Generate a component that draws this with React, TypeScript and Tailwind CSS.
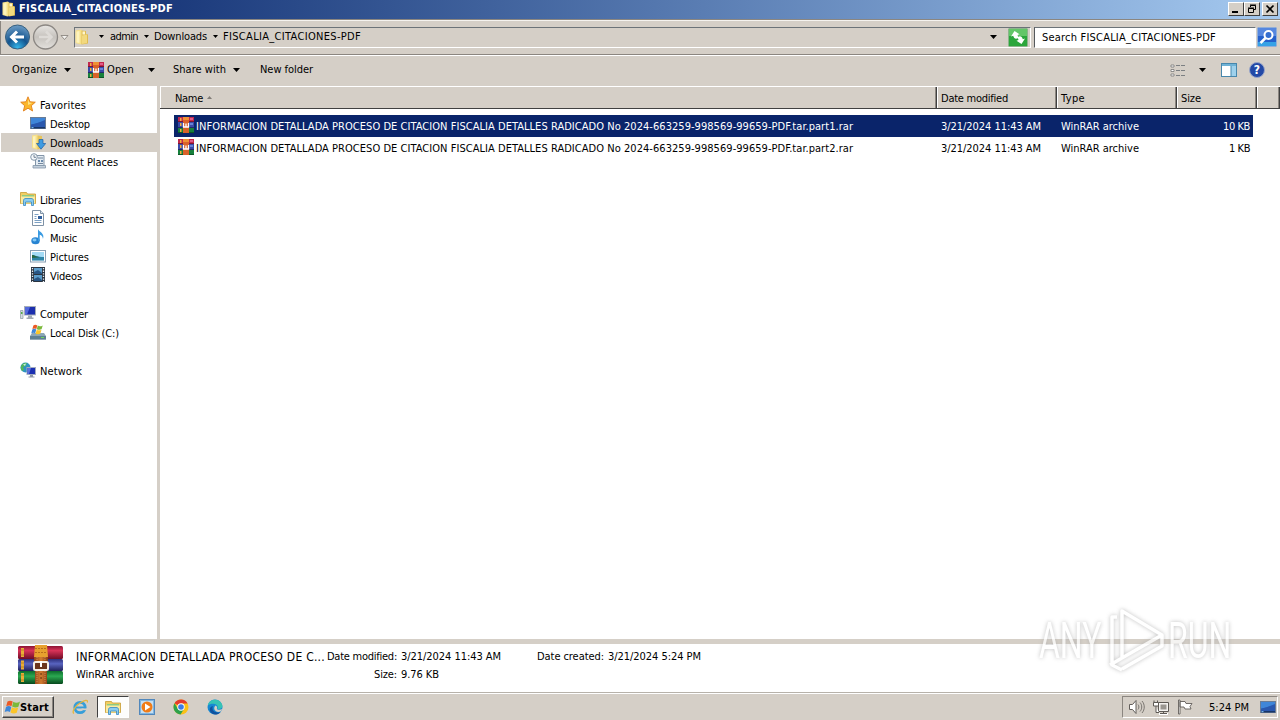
import { useLayoutEffect, useRef, useState } from 'react';
import type { ReactNode } from 'react';

interface LabelProps {
  w: number;
  children: string;
  className?: string;
}

// Text fitted to a fixed width by adjusting its tracking
function Label({ w, children, className = '' }: LabelProps) {
  const ref = useRef<HTMLSpanElement>(null);
  const [spacing, setSpacing] = useState(0);

  useLayoutEffect(() => {
    if (!ref.current) return;
    setSpacing((w - ref.current.getBoundingClientRect().width) / children.length);
  }, [w, children]);

  return (
    <span className={`flex shrink-0 whitespace-pre ${className}`} style={{ width: w }}>
      <span ref={ref} className="shrink-0" style={{ letterSpacing: spacing }}>
        {children}
      </span>
    </span>
  );
}

function Arrow({ className = '' }: { className?: string }) {
  return (
    <svg viewBox="0 0 7 4" className={`h-1 w-[7px] shrink-0 ${className}`}>
      <path d="M0 0h7L3.5 4z" fill="#000" />
    </svg>
  );
}

function SmallArrow({ className = '' }: { className?: string }) {
  return (
    <svg viewBox="0 0 5 3" className={`h-[3px] w-[5px] shrink-0 ${className}`}>
      <path d="M0 0h5L2.5 3z" fill="#000" />
    </svg>
  );
}

function FolderIcon() {
  return (
    <svg viewBox="0 0 16 16" className="size-4 shrink-0">
      <path d="M1.500 1.500 7 .5l1 1v13l-1.500 1L1.500 14z" fill="#f6e08a" />
      <path d="M7.500 1.500 12 2v3l2 .5v9l-6.500 1z" fill="#dfbb50" />
      <path d="M8 6.500 13 5.500v8.500l-5 1z" fill="#f2d97e" />
      <path d="M2.500 2.500 5.500 2v12l-3-.5z" fill="#fdf3bd" />
      <path d="M8.500 2.500h2.500v3H8.500z" fill="#fff6cc" />
    </svg>
  );
}

function RarIcon() {
  return (
    <svg viewBox="0 0 16 16" className="size-4 shrink-0">
      <rect y="0" width="16" height="5" fill="#c2284c" />
      <rect y="5" width="16" height="6" fill="#3949a8" />
      <rect y="11" width="16" height="5" fill="#16803c" />
      <path d="M0 4h16v1H0z" fill="#7c1430" />
      <path d="M0 10h16v1H0z" fill="#23276a" />
      <path d="M0 15h16v1H0z" fill="#0c5726" />
      <path d="M2 1h1.500v3H2zM2 6h1.500v3H2zM2 12h1.500v3H2z" fill="#efae3c" />
      <path d="M12 1h3v2h-3z" fill="#e05c8a" />
      <path d="M12 6h3v2h-3z" fill="#6684d8" />
      <path d="M5 0h6v16H5z" fill="#d9622a" />
      <path d="M5 0h6v3H5z" fill="#f09035" />
      <path d="M5.500 6v4h5V6M8 6.500v3" fill="none" stroke="#fff" strokeWidth="1.300" />
    </svg>
  );
}

function BigRarIcon() {
  return (
    <svg viewBox="0 0 46 40" className="h-10 w-[46px] shrink-0">
      <defs>
        <linearGradient id="bookRed" x2="0" y2="1">
          <stop offset="0" stopColor="#8c1433" />
          <stop offset=".35" stopColor="#d83358" />
          <stop offset="1" stopColor="#6e0c26" />
        </linearGradient>
        <linearGradient id="bookBlue" x2="0" y2="1">
          <stop offset="0" stopColor="#2c2f7c" />
          <stop offset=".4" stopColor="#5964c0" />
          <stop offset="1" stopColor="#202058" />
        </linearGradient>
        <linearGradient id="bookGreen" x2="0" y2="1">
          <stop offset="0" stopColor="#0c6a2c" />
          <stop offset=".4" stopColor="#2ba851" />
          <stop offset="1" stopColor="#07481d" />
        </linearGradient>
        <linearGradient id="belt">
          <stop offset="0" stopColor="#8e451b" />
          <stop offset=".5" stopColor="#d27c31" />
          <stop offset="1" stopColor="#873d16" />
        </linearGradient>
      </defs>
      <rect y="1" x="1" width="45" height="13" rx="1.500" fill="url(#bookRed)" />
      <rect y="14" x="1" width="45" height="12" rx="1.500" fill="url(#bookBlue)" />
      <rect y="26" x="1" width="45" height="13" rx="1.500" fill="url(#bookGreen)" />
      <path d="M4 3h3v9H4zM4 15.500h3v9H4zM4 28h3v9H4z" fill="#e9ad38" />
      <path d="M4 5h3M4 10h3M4 18h3M4 22h3M4 30h3M4 35h3" stroke="#9e6a18" strokeWidth=".6" />
      <path d="M18 0h12l1 12H17z" fill="#e8a12e" />
      <path d="M18 3.500h12M18 7.500h12" stroke="#b86e1b" strokeWidth="1" strokeDasharray="2 1" />
      <path d="M17 12h14v4l-1 2v21H18V18l-1-2z" fill="url(#belt)" />
      <path d="M20 12v26M28 12v26" stroke="#eab176" strokeWidth=".6" strokeDasharray="1 1" />
      <rect x="17" y="17" width="14" height="8" rx="1.500" fill="#6b351c" stroke="#f5f0e7" strokeWidth="2" />
      <path d="M24 16v6" stroke="#fff" strokeWidth="2" />
      <path d="M24 29h.1M24 33h.1" stroke="#4c2109" strokeWidth="1.500" strokeLinecap="round" />
    </svg>
  );
}

function StarIcon() {
  return (
    <svg viewBox="0 0 16 16" className="size-4 shrink-0">
      <path d="m8 .8 2 5 5.300.400-4 3.500 1.300 5.300L8 12.200 3.400 15l1.300-5.300-4-3.500L6 5.800z" fill="#fbb72c" stroke="#e2801d" strokeWidth=".9" />
      <path d="m8 3 1.200 3.500 3 .5-4.200 2z" fill="#ffe486" />
    </svg>
  );
}

function DesktopIcon() {
  return (
    <svg viewBox="0 0 16 16" className="size-4 shrink-0">
      <rect x=".5" y="2.500" width="15" height="11" fill="#2563b4" stroke="#6a7c94" />
      <path d="M1 3h14v3L1 10z" fill="#3f86d8" />
      <path d="M1 9.500C6 9 10 7 15 5v7H1z" fill="#2a58ae" />
      <path d="M1 12h14v1.500H1z" fill="#183668" />
      <path d="M1.500 12h2v1.200h-2z" fill="#75b6ed" />
    </svg>
  );
}

function DownloadsIcon() {
  return (
    <svg viewBox="0 0 16 16" className="size-4 shrink-0">
      <path d="M2 1.500 7 .5l1 1v13l-1.500 1L2 14z" fill="#f6e08a" />
      <path d="M7.500 1.500 12 2v12l-4.500 1.500z" fill="#e8c55b" />
      <path d="M3 2.500 5.500 2v12L3 13.500z" fill="#fdf3bd" />
      <path d="M9 5.500h4v4h2.700L11 15.200 6.500 9.500H9z" fill="#3f9be2" stroke="#1d5fa5" strokeWidth=".7" />
    </svg>
  );
}

function RecentIcon() {
  return (
    <svg viewBox="0 0 16 16" className="size-4 shrink-0">
      <path d="M5.500 2.500h8.500v10H5.500z" fill="#e3ebf2" stroke="#8395a8" />
      <path d="M3 12.500h12.500V15H3z" fill="#c4d0dc" stroke="#8395a8" strokeWidth=".8" />
      <path d="M8 5h5M8 10.500h5" stroke="#74879d" />
      <path d="M8 7h2v2H8zM11 7h2v2h-2z" fill="#6d8cae" />
      <circle cx="4" cy="4" r="3.300" fill="#f5f8fb" stroke="#8698aa" />
      <path d="M4 2v2.300h2" fill="none" stroke="#50657c" strokeWidth=".8" />
    </svg>
  );
}

function LibrariesIcon() {
  return (
    <svg viewBox="0 0 16 16" className="size-4 shrink-0">
      <path d="M.5 3V1.500h6l1 1.500h8v9.500H.5z" fill="#f2cf63" stroke="#c79c34" strokeWidth=".8" />
      <path d="M2 4h12v2H2z" fill="#8ecb83" />
      <path d="M1 5.500h14v7H1z" fill="#fbeaa0" />
      <path d="M3.500 14.500V9.700C3.500 8 4.500 7.500 6 7.500h5c1.500 0 2.500.5 2.500 2.200v4.800h-2v-3.500h-6v3.500z" fill="#8accf1" stroke="#3588c2" strokeWidth=".8" />
    </svg>
  );
}

function DocumentsIcon() {
  return (
    <svg viewBox="0 0 16 16" className="size-4 shrink-0">
      <path d="M2.500.5h8l3 3v12h-11z" fill="#fff" stroke="#7f92a6" />
      <path d="M10.500.5v3h3" fill="#dce6ef" stroke="#7f92a6" />
      <path d="M4.500 4.500h4M4.500 6.500h2M4.500 8.500h2M4.500 10.500h7M4.500 12.500h7" stroke="#7ca0c4" />
      <path d="M8 6h4v3H8z" fill="#305f9e" />
    </svg>
  );
}

function MusicIcon() {
  return (
    <svg viewBox="0 0 16 16" className="size-4 shrink-0">
      <ellipse cx="5.500" cy="11.800" rx="4.200" ry="3.500" fill="#2784d2" />
      <ellipse cx="4.500" cy="11" rx="2" ry="1.400" fill="#83c8f5" />
      <path d="M8 12V.3C9.500 3 15 4.500 13 10c-.3-2.500-1.500-3.700-3.300-4.200V12z" fill="#3a9be2" />
    </svg>
  );
}

function PicturesIcon() {
  return (
    <svg viewBox="0 0 16 16" className="size-4 shrink-0">
      <rect x=".5" y="2.500" width="15" height="11.500" fill="#fff" stroke="#8aa0b4" />
      <path d="M2 4h12v8.500H2z" fill="#a4dbf5" />
      <path d="M2 7c3 0 5 2 12 2v3.500H2z" fill="#2e84a6" />
      <path d="M2 7c3 0 4 2 8 2.300L2 10z" fill="#276843" />
    </svg>
  );
}

function VideosIcon() {
  return (
    <svg viewBox="0 0 16 16" className="size-4 shrink-0">
      <path d="M1 0h14v15H1z" fill="#2a3440" />
      <path d="M4 1h8v6H4zM4 8h8v6H4z" fill="#5c9dcb" />
      <path d="m4 5 4-2 4 3v1H4zM4 12l4-2 4 3v1H4z" fill="#285583" />
      <path d="M2.500 1v14M13.500 1v14" stroke="#e9eef3" strokeWidth="1.300" strokeDasharray="1.300 1.300" />
    </svg>
  );
}

function ComputerIcon() {
  return (
    <svg viewBox="0 0 16 16" className="size-4 shrink-0">
      <rect x="4.500" y="1.500" width="11" height="8.500" fill="#1c2fae" stroke="#a5adb8" />
      <path d="M5 2h5L7 9.500H5z" fill="#5369dc" />
      <path d="M8 10.500h4v2H8zM6.500 12.500h7V14h-7z" fill="#a2aab4" />
      <path d="M.5 5.500h2.500v8H.5z" fill="#d6dde0" stroke="#8b99a2" strokeWidth=".7" />
      <path d="M1 7h1.500v2H1z" fill="#55ae48" />
    </svg>
  );
}

function FlagShape() {
  return (
    <>
      <path d="M2.500 2.500C4.500 1.200 6 1.500 7.700 2.500L6.500 7.300C5 6.300 3.300 6.300 1.200 7.300z" fill="#ec5a25" />
      <path d="M8.300 2.800C10.500 4 12.500 4 15 2.500l-1.600 5.300c-2 1-4 .8-6.300-.2z" fill="#7bb93a" />
      <path d="M1 7.900c2-1.200 3.600-1 5.300 0L5 13c-1.700-1-3.400-1-5.300 0z" fill="#3e87d8" />
      <path d="M6.900 8.300c2 1 4 1.200 6.300.2l-1.500 5.300c-2 1-4.200.8-6.200-.2z" fill="#fbc529" />
    </>
  );
}

function DiskIcon() {
  return (
    <svg viewBox="0 0 16 16" className="size-4 shrink-0">
      <path d="M2 9h12l2 3v3.500H0V12z" fill="#8ba6b6" />
      <path d="M0 12h16v3.500H0z" fill="#5e7f92" />
      <path d="M11 13.500h3" stroke="#71d85b" />
      <g transform="translate(1.500 -.5) scale(.75)">
        <FlagShape />
      </g>
    </svg>
  );
}

function NetworkIcon() {
  return (
    <svg viewBox="0 0 16 16" className="size-4 shrink-0">
      <circle cx="5.500" cy="5.500" r="5" fill="#2e93c3" />
      <path d="M2 2.500c2-2 4-1.500 5-1.500L5.500 4 3 5l1 3-2 1C.2 7 .5 4.500 2 2.500z" fill="#52b65b" />
      <path d="M3 2.500 6 1.500 5 4z" fill="#c7f0e6" />
      <rect x="7" y="5.500" width="8.500" height="7" fill="#1b30b2" stroke="#a3abc0" />
      <path d="M7.500 6h3.500l-2 6H7.500z" fill="#5a70dd" />
      <path d="M10 13h3v1.500h1.500v1h-6v-1H10z" fill="#8f98a6" />
    </svg>
  );
}

interface NavItem {
  text: string;
  w: number;
  icon: ReactNode;
  root?: boolean;
  active?: boolean;
}

const navGroups: NavItem[][] = [
  [
    { text: 'Favorites', w: 46, icon: <StarIcon />, root: true },
    { text: 'Desktop', w: 40, icon: <DesktopIcon /> },
    { text: 'Downloads', w: 53, icon: <DownloadsIcon />, active: true },
    { text: 'Recent Places', w: 68, icon: <RecentIcon /> },
  ],
  [
    { text: 'Libraries', w: 41, icon: <LibrariesIcon />, root: true },
    { text: 'Documents', w: 54, icon: <DocumentsIcon /> },
    { text: 'Music', w: 27, icon: <MusicIcon /> },
    { text: 'Pictures', w: 39, icon: <PicturesIcon /> },
    { text: 'Videos', w: 32, icon: <VideosIcon /> },
  ],
  [
    { text: 'Computer', w: 48, icon: <ComputerIcon />, root: true },
    { text: 'Local Disk (C:)', w: 69, icon: <DiskIcon /> },
  ],
  [{ text: 'Network', w: 42, icon: <NetworkIcon />, root: true }],
];

const files = [
  {
    name: 'INFORMACION DETALLADA PROCESO DE CITACION FISCALIA DETALLES RADICADO No 2024-663259-998569-99659-PDF.tar.part1.rar',
    size: '10 KB',
    sizeWidth: 27,
    selected: true,
  },
  {
    name: 'INFORMACION DETALLADA PROCESO DE CITACION FISCALIA DETALLES RADICADO No 2024-663259-998569-99659-PDF.tar.part2.rar',
    size: '1 KB',
    sizeWidth: 21,
    selected: false,
  },
];

function TitleBar() {
  const button =
    'flex h-[14px] w-4 items-center justify-center border border-t-white border-l-white border-r-[#404040] border-b-[#404040] bg-[#d5cfc7]';
  return (
    <div className="flex h-[19px] items-center bg-linear-to-r from-[#0a246a] to-[#a6caf0] pr-[2px] pb-px pl-px">
      <FolderIcon />
      <Label w={154} className="ml-[2px] font-bold text-white">
        FISCALIA_CITACIONES-PDF
      </Label>
      <div className="ml-auto flex">
        <div className={button}>
          <svg viewBox="0 0 12 12" className="size-3 shrink-0">
            <path d="M2 8h6v2H2z" />
          </svg>
        </div>
        <div className={button}>
          <svg viewBox="0 0 12 12" className="size-3 shrink-0" fill="none" stroke="#000">
            <path d="M4.500 4V2.500h5v4H8M4 2h6M2.500 5.500h5v4h-5zM2 5h6" />
          </svg>
        </div>
        <div className={`${button} ml-[2px]`}>
          <svg viewBox="0 0 12 12" className="size-3 shrink-0">
            <path d="m2.500 2.500 7 7M9.500 2.500l-7 7" stroke="#000" strokeWidth="1.700" />
          </svg>
        </div>
      </div>
    </div>
  );
}

function AddressBar() {
  return (
    <div className="flex h-[36px] items-center border-t border-b border-t-[#8b8680] border-b-[#8b8680] shadow-[inset_0_1px_0_#f5f3ef,inset_1px_0_0_#8b8680]">
      <svg viewBox="0 0 66 28" className="ml-[4px] h-7 w-[66px] shrink-0">
        <defs>
          <radialGradient id="backFill" cx=".5" cy=".95" r=".95">
            <stop offset="0" stopColor="#35b8ec" />
            <stop offset=".45" stopColor="#14558f" />
            <stop offset="1" stopColor="#6e9dc6" />
          </radialGradient>
          <linearGradient id="forwardFill" x2="0" y2="1">
            <stop offset="0" stopColor="#e8e6e3" />
            <stop offset=".5" stopColor="#c6c2bd" />
            <stop offset="1" stopColor="#e4e1dd" />
          </linearGradient>
        </defs>
        <circle cx="13.500" cy="14" r="12" fill="url(#backFill)" stroke="#37607f" />
        <path d="M20 14H8M13 8.500 7.500 14l5.500 5.500" fill="none" stroke="#fff" strokeWidth="3" />
        <circle cx="41.500" cy="14" r="12" fill="url(#forwardFill)" stroke="#8b8783" strokeWidth="1.300" />
        <path d="M35 14h12M42 8.500l5.500 5.500-5.500 5.500" fill="none" stroke="#dedbd7" strokeWidth="2.500" />
        <path d="M57 12.500h7L60.500 16.500z" fill="#f5f3f0" stroke="#817c76" strokeWidth=".8" />
      </svg>
      <div className="ml-[4px] flex h-[21px] w-[957px] items-center border border-t-[#6c7378] border-r-white border-b-white border-l-[#6c7378] pb-px">
        <span className="-ml-px">
          <FolderIcon />
        </span>
        <SmallArrow className="ml-[9px]" />
        <Label w={28} className="ml-[6px]">admin</Label>
        <SmallArrow className="ml-[6px]" />
        <Label w={53} className="ml-[5px]">Downloads</Label>
        <SmallArrow className="ml-[6px]" />
        <Label w={138} className="ml-[5px]">FISCALIA_CITACIONES-PDF</Label>
        <Arrow className="mr-[33px] ml-auto" />
      </div>
      <svg viewBox="0 0 20 19" className="-ml-[23px] h-[19px] w-5 shrink-0">
        <rect x=".5" y=".5" width="19" height="18" rx="1" fill="#2ba63b" stroke="#8cb48c" />
        <path d="M1 1h18v7H1z" fill="#63c668" />
        <path d="M10.500 10 9.500 7l2-.8L6.500 3 3 8.500l2.200-.8C6 10.500 7.500 11.500 10.500 10z" fill="#fff" />
        <path d="M9.500 9l1 3-2 .8L13.500 16 17 10.500l-2.200.8C14 8.500 12.500 7.500 9.500 9z" fill="#fff" />
      </svg>
      <div className="ml-[6px] flex h-[21px] w-[222px] items-center border border-t-[#6c7378] border-r-white border-b-white border-l-[#55595c] bg-white pt-px pl-[7px]">
        <Label w={174}>Search FISCALIA_CITACIONES-PDF</Label>
      </div>
      <svg viewBox="0 0 20 20" className="ml-px size-5 shrink-0">
        <rect x=".5" y=".5" width="19" height="19" rx="1" fill="#2460cc" stroke="#92afd8" />
        <path d="M1 1h18v8H1z" fill="#5687df" />
        <path d="M1 15h18v4H1z" fill="#36a2e6" />
        <circle cx="11.500" cy="8" r="4" fill="#356ed0" stroke="#fff" strokeWidth="2" />
        <path d="m8.500 11-5 5" stroke="#fff" strokeWidth="2.500" />
      </svg>
    </div>
  );
}

function ToolBar() {
  return (
    <div className="flex h-[30px] items-center border-t border-white pb-px pl-3">
      <Label w={45}>Organize</Label>
      <Arrow className="ml-[7px]" />
      <span className="ml-[17px] flex items-center">
        <RarIcon />
      </span>
      <Label w={27} className="ml-[3px]">Open</Label>
      <Arrow className="ml-[14px]" />
      <Label w={53} className="ml-[18px]">Share with</Label>
      <Arrow className="ml-[7px]" />
      <Label w={53} className="ml-[20px]">New folder</Label>
      <svg viewBox="0 0 16 13" className="ml-auto h-[13px] w-4" fill="none">
        <path d="M1 1h3v2H1zM1 5.500h3v2H1zM1 10h3v2H1z" fill="#fff" stroke="#777" strokeWidth=".8" />
        <path d="M6 1.500h4M11 1.500h4M6 6.500h4M11 6.500h4M6 11.500h4M11 11.500h4" stroke="#7b7f82" />
      </svg>
      <Arrow className="ml-[13px]" />
      <svg viewBox="0 0 16 14" className="ml-[15px] h-[14px] w-4">
        <rect x=".5" y=".5" width="15" height="13" fill="#fff" stroke="#4787ac" />
        <path d="M1 1h14v2H1z" fill="#6eb2d6" />
        <path d="M10 3h5v10h-5z" fill="#9ed1ec" />
        <path d="M10 3v10" stroke="#4787ac" />
      </svg>
      <div className="mr-[15px] ml-[12px] flex size-4 items-center justify-center rounded-full border border-[#98a5c9] bg-[#2349a6] text-[12px] font-bold text-white">
        ?
      </div>
    </div>
  );
}

function Sidebar() {
  return (
    <div className="flex w-[157px] shrink-0 flex-col gap-[19px] bg-white pt-[9px]">
      {navGroups.map((group) => (
        <div key={group[0].text}>
          {group.map((item) => (
            <div
              key={item.text}
              className={`ml-px flex h-[19px] items-center ${item.root ? 'pl-[19px]' : 'pl-[29px]'} ${item.active ? 'bg-[#d5cfc7]' : ''}`}
            >
              <span className="-mt-[2px]">{item.icon}</span>
              <Label w={item.w} className="ml-[4px] pt-[2px]">{item.text}</Label>
            </div>
          ))}
        </div>
      ))}
    </div>
  );
}

function FileList() {
  const head =
    'flex h-full shrink-0 items-center border-r border-r-[#404040] pt-[2px] shadow-[inset_1px_0_0_#fff,inset_-1px_0_0_#8b8680]';
  return (
    <div className="flex min-w-0 flex-1 flex-col bg-white">
      <div className="flex h-[23px] shrink-0 border-t border-b border-t-white border-b-[#404040] bg-[#d5cfc7]">
        <div className={`${head} w-[777px] pl-[15px]`}>
          <Label w={28}>Name</Label>
          <svg viewBox="0 0 5 3" className="mb-[3px] ml-[4px] h-[3px] w-[5px]">
            <path d="M0 3h5L2.500 0z" fill="#807b76" />
          </svg>
        </div>
        <div className={`${head} w-[120px] pl-[4px]`}>
          <Label w={67}>Date modified</Label>
        </div>
        <div className={`${head} w-[120px] pl-[4px]`}>
          <Label w={24}>Type</Label>
        </div>
        <div className={`${head} w-[80px] pl-[4px]`}>
          <Label w={20}>Size</Label>
        </div>
        <div className={`${head} w-[23px]`} />
      </div>
      <div className="mt-[6px] ml-[14px] w-[1079px]">
        {files.map((file) => (
          <div
            key={file.name}
            className={`flex h-[22px] items-center pt-[2px] pl-[4px] ${file.selected ? 'bg-[#0a246a] text-white' : ''}`}
          >
            <span className="-mt-[5px]">
              <RarIcon />
            </span>
            <Label w={657} className="ml-[2px]">{file.name}</Label>
            <Label w={100} className="ml-[88px]">3/21/2024 11:43 AM</Label>
            <Label w={78} className="ml-[20px]">WinRAR archive</Label>
            <Label w={file.sizeWidth} className="mr-[3px] ml-auto">{file.size}</Label>
          </div>
        ))}
      </div>
    </div>
  );
}

function DetailsPane() {
  return (
    <div className="flex h-[48px] bg-white pt-px pl-[17px]">
      <BigRarIcon />
      <div className="ml-[13px] w-[251px] pt-[3px]">
        <div className="flex h-[18px] items-center text-[12px]">
          <Label w={249}>INFORMACION DETALLADA PROCESO DE C...</Label>
        </div>
        <div className="flex h-[18px] items-center">
          <Label w={78}>WinRAR archive</Label>
        </div>
      </div>
      <div className="w-[210px] pt-[3px]">
        <div className="flex h-[18px] items-center">
          <Label w={70}>Date modified:</Label>
          <Label w={100} className="ml-[4px]">3/21/2024 11:43 AM</Label>
        </div>
        <div className="flex h-[18px] items-center">
          <Label w={23} className="ml-[47px]">Size:</Label>
          <Label w={38} className="ml-[4px]">9.76 KB</Label>
        </div>
      </div>
      <div className="flex h-[24px] items-center">
        <Label w={67}>Date created:</Label>
        <Label w={93} className="ml-[4px]">3/21/2024 5:24 PM</Label>
      </div>
    </div>
  );
}

function TaskBar() {
  return (
    <div className="flex h-[28px] items-center border-t border-[#b7b2aa] shadow-[inset_0_1px_0_#fff]">
      <div className="mt-px ml-[2px] flex h-[22px] w-[52px] items-center border border-t-white border-r-[#404040] border-b-[#404040] border-l-white pl-px shadow-[inset_-1px_-1px_0_#8b8680]">
        <svg viewBox="-1 0 16 16" className="size-4 shrink-0">
          <FlagShape />
        </svg>
        <Label w={29} className="pt-px font-bold">Start</Label>
      </div>
      <svg viewBox="0 0 16 16" className="ml-[18px] size-4" fill="none">
        <circle cx="8" cy="8.500" r="5.200" stroke="#369ed9" strokeWidth="2.800" />
        <path d="M4 8.500h9" stroke="#369ed9" strokeWidth="2" />
        <path d="M9.500 10.300h6" stroke="#d5cfc7" strokeWidth="1.700" />
        <path d="M2 14.500C-.5 13 3 7 8 4s8-4 7.300-.5" stroke="#e5b63c" strokeWidth="1.300" />
      </svg>
      <div className="mt-px ml-[9px] flex h-[22px] w-8 items-center justify-center border border-t-[#404040] border-r-white border-b-white border-l-[#404040] bg-[#fdfdfc] pt-px">
        <LibrariesIcon />
      </div>
      <svg viewBox="0 0 16 16" className="ml-[10px] size-4">
        <rect x=".5" y=".5" width="15" height="15" fill="#7fb5e0" stroke="#5187bb" />
        <path d="M2 2h12v12H2z" fill="#c6dff2" />
        <circle cx="8" cy="8" r="5.500" fill="#f07c17" />
        <path d="m6 4.500 5.500 3.500L6 11.500z" fill="#fff" />
      </svg>
      <svg viewBox="0 0 16 16" className="ml-[18px] size-4">
        <circle cx="8" cy="8" r="7.500" fill="#fbc116" />
        <path d="M8 8 1.500 4.200A7.500 7.500 0 0 1 14.600 4.400H8z" fill="#e33b2e" />
        <path d="M1.500 4.200A7.500 7.500 0 0 0 7.500 15.500L11 10 5 10z" fill="#2da14c" />
        <circle cx="8" cy="8" r="3.700" fill="#fff" />
        <circle cx="8" cy="8" r="2.800" fill="#3c7ce6" />
      </svg>
      <svg viewBox="0 0 16 16" className="ml-[18px] size-4">
        <circle cx="8" cy="8" r="7.500" fill="#1688d2" />
        <path d="M.8 6.500C2-.5 13-1.500 15.300 6c.8 3-2 4.500-5 3.800 1.500-3-1-5-4-5-2.500 0-4.500.5-5.500 1.700z" fill="#36c3b5" />
        <path d="M6 7c-2 4 2 8 7.500 6-3 4-9 3-10.500-1-.8-2.500.5-4.500 3-5z" fill="#11529f" />
        <path d="M8.500 6.500c1.500.5 2 2 1.300 3.500 1.500 1.200 4 1 5.500 0-.5 2-2 3-4 3-3.500 0-5.500-4-2.800-6.500z" fill="#d5cfc7" />
      </svg>
      <div className="mt-px mr-[2px] ml-auto flex h-[22px] w-[156px] items-center border border-t-[#8b8680] border-r-white border-b-white border-l-[#8b8680]">
        <svg viewBox="0 0 16 14" className="ml-[6px] h-[14px] w-4" fill="none" stroke="#625e5a">
          <path d="M.5 4.500h3l3.500-4v13l-3.500-4h-3z" fill="#fff" />
          <path d="M9 4.500c1.200 1.500 1.200 3.500 0 5M11 2.500c2.300 2.500 2.300 6.500 0 9M13 1c3 3.500 3 8.500 0 12" strokeWidth=".8" />
        </svg>
        <svg viewBox="0 0 16 15" className="ml-[8px] h-[15px] w-4" fill="none" stroke="#5d5954">
          <path d="M5.500 2.500h10v9h-10z" fill="#f4f2ef" />
          <path d="M7.500 4.500h6v5h-6z" fill="#9a9690" stroke="none" />
          <path d="M6 14h9" stroke="#fff" strokeWidth="2" />
          <path d="M7 13.500h7M10.500 11.500v2" />
          <path d="M1 .5v2M4.500.5v2M.5 2.500h5v3.500H.5zM3 6v6.500h3" fill="#fff" />
        </svg>
        <svg viewBox="0 0 16 16" className="ml-[8px] size-4" fill="#fff" stroke="#625e5a" strokeWidth=".9">
          <path d="M1.500 1v14H3V1zM3 2.500h5l1 2h6l-2 3 1 2.500H8l-1-2H3z" />
        </svg>
        <Label w={40} className="ml-[16px] pt-px">5:24 PM</Label>
        <span className="ml-[11px]">
          <DesktopIcon />
        </span>
      </div>
    </div>
  );
}

function Watermark() {
  return (
    <svg
      viewBox="0 0 210 90"
      className="absolute top-[600px] left-[1030px] h-[90px] w-[210px] overflow-visible opacity-75 drop-shadow-[0_0_2px_#aaa]"
      fill="none"
      stroke="#fff"
      strokeWidth="3.500"
      strokeLinejoin="round"
    >
      <g fill="#fff" stroke="none" className="font-[Roboto] text-[50px]">
        <text transform="translate(9 58) scale(.64 1)">ANY</text>
        <text transform="translate(138 58) scale(.64 1)">RUN</text>
      </g>
      <path d="M92 11v47l40-23zM87 17h-5v47M92 58 80 65M92 69l40-23v-11M82 65l10 5" />
    </svg>
  );
}

export default function App() {
  return (
    <div className="relative flex h-[720px] w-[1280px] flex-col overflow-hidden bg-[#d5cfc7] font-['DejaVu_Sans_Condensed','DejaVu_Sans',sans-serif] text-[11px] leading-[14px] text-black">
      <TitleBar />
      <AddressBar />
      <ToolBar />
      <div className="flex h-[554px] border-t border-[#d5cfc7]">
        <Sidebar />
        <div className="w-[3px] shrink-0 bg-[#d5cfc7]" />
        <FileList />
      </div>
      <div className="h-[5px] bg-[#d5cfc7]" />
      <DetailsPane />
      <TaskBar />
      <Watermark />
    </div>
  );
}
